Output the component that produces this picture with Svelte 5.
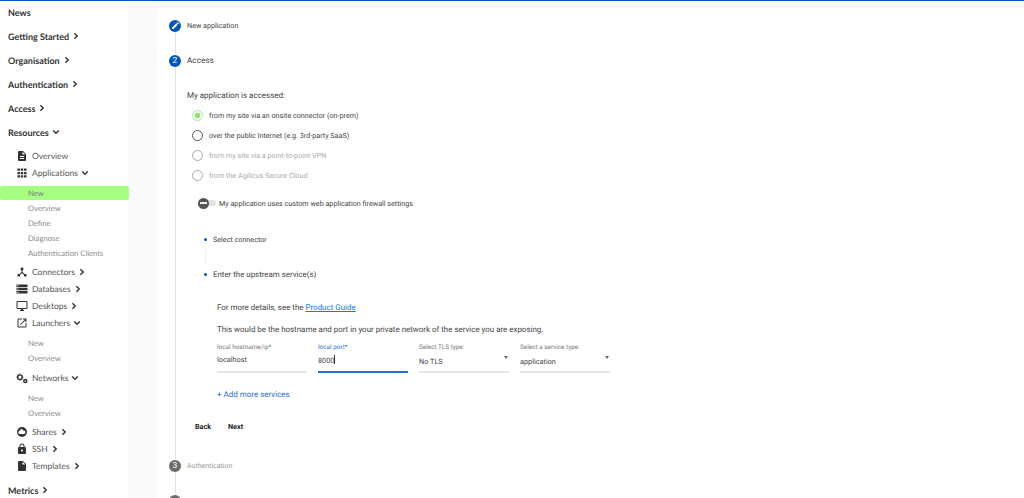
<script lang="ts">
  const radios = [
    { label: 'from my site via an onsite connector (on-prem)', checked: true },
    { label: 'over the public Internet (e.g. 3rd-party SaaS)' },
    { label: 'from my site via a point-to-point VPN', disabled: true },
    { label: 'from the Agilicus Secure Cloud', disabled: true }
  ];
  const appItems = ['New', 'Overview', 'Define', 'Diagnose', 'Authentication Clients'];
</script>

{#snippet chevron(open = false)}
  <svg class="chev" viewBox="0 0 10 10" fill="none" stroke="currentColor" stroke-width="1.8">
    {#if open}
      <polyline points="1.5,3 5,6.5 8.5,3" />
    {:else}
      <polyline points="3,1.5 6.5,5 3,8.5" />
    {/if}
  </svg>
{/snippet}

{#snippet sub(label, open, icon)}
  <div class="sub">
    <svg class="ico" viewBox="0 0 24 24" fill="#333">{@html icon}</svg>
    <span>{label}</span>
    {#if open !== null}{@render chevron(open)}{/if}
  </div>
{/snippet}

<div class="page">
  <aside class="sidebar">
    <div class="top">News</div>
    <div class="top">Getting Started {@render chevron()}</div>
    <div class="top">Organisation {@render chevron()}</div>
    <div class="top">Authentication {@render chevron()}</div>
    <div class="top">Access {@render chevron()}</div>
    <div class="top">Resources {@render chevron(true)}</div>

    <div class="subs">
      {@render sub('Overview', null, '<path d="M14 2H6a2 2 0 0 0-2 2v16a2 2 0 0 0 2 2h12a2 2 0 0 0 2-2V8zm2 16H8v-2h8zm0-4H8v-2h8zm-3-5V3.500L18.500 9z"/>')}
      {@render sub('Applications', true, '<path transform="translate(1.200 1.200) scale(.9)" d="M2 7h5.500V2H2zm7.300 15h5.400v-5H9.300zM2 22h5.500v-5H2zm0-7.500h5.500v-5H2zm7.300 0h5.400v-5H9.300zM16.500 2v5H22V2zM9.300 7h5.400V2H9.300zm7.200 7.500H22v-5h-5.500zm0 7.500H22v-5h-5.500z"/>')}
      <div class="nest apps">
        {#each appItems as item, i}
          <div class="leaf" class:active={i === 0}>{item}</div>
        {/each}
      </div>
      {@render sub('Connectors', false, '<path d="M17 16l-4-4V8.820A3 3 0 0 0 12 3a3 3 0 0 0-1 5.820V12l-4 4H3v5h5v-3.050l4-4.200 4 4.200V21h5v-5z"/>')}
      {@render sub('Databases', false, '<path d="M1 21h22v-5H1zm2-3h2v2H3zM1 3v5h22V3zm4 3H3V4h2zm-4 8.500h22v-5H1zM3 11h2v2H3z"/>')}
      {@render sub('Desktops', false, '<path d="M21 2H3a2 2 0 0 0-2 2v12a2 2 0 0 0 2 2h7v2H8v2h8v-2h-2v-2h7a2 2 0 0 0 2-2V4a2 2 0 0 0-2-2zm0 14H3V4h18z"/>')}
      {@render sub('Launchers', true, '<path d="M19 19H5V5h7V3H5a2 2 0 0 0-2 2v14a2 2 0 0 0 2 2h14a2 2 0 0 0 2-2v-7h-2zM14 3v2h3.590l-9.830 9.830 1.410 1.410L19 6.410V10h2V3z"/>')}
      <div class="nest pair">
        <div class="leaf">New</div>
        <div class="leaf">Overview</div>
      </div>
      {@render sub('Networks', true, '<path d="M11 8.500 9.900 8.100a4 4 0 0 0-.3-.8l.5-1.100-1.300-1.300-1.100.5a4 4 0 0 0-.8-.3L6.500 3.500h-2l-.4 1.100a4 4 0 0 0-.8.3l-1.100-.5L.9 5.700l.5 1.100a4 4 0 0 0-.3.8L0 8v2l1.100.4q.1.4.3.8l-.5 1.100 1.300 1.300 1.100-.5q.4.200.8.3l.4 1.100h2l.4-1.100q.4-.1.8-.3l1.100.5 1.300-1.300-.5-1.100q.2-.4.3-.8L11 10zM5.500 11.500a2.500 2.500 0 1 1 0-5 2.500 2.500 0 0 1 0 5z" transform="translate(1 -1) scale(1.250)"/><circle cx="18.500" cy="18" r="4.500"/><circle cx="18.500" cy="18" r="1.500" fill="#fff"/>')}
      <div class="nest pair last">
        <div class="leaf">New</div>
        <div class="leaf">Overview</div>
      </div>
      {@render sub('Shares', false, '<path d="M12 2a10 10 0 1 0 0 20 10 10 0 0 0 0-20zm4.500 14h-9a3 3 0 0 1-.3-6A4 4 0 0 1 15 9.500a3.300 3.300 0 0 1 1.500 6.500z"/>')}
      {@render sub('SSH', false, '<path d="M18 8h-1V6A5 5 0 0 0 7 6v2H6a2 2 0 0 0-2 2v10a2 2 0 0 0 2 2h12a2 2 0 0 0 2-2V10a2 2 0 0 0-2-2zm-6 9a2 2 0 1 1 0-4 2 2 0 0 1 0 4zm3.100-9H8.900V6a3.100 3.100 0 0 1 6.200 0z"/>')}
      {@render sub('Templates', false, '<path d="M6 2a2 2 0 0 0-2 2v16a2 2 0 0 0 2 2h12a2 2 0 0 0 2-2V8l-6-6zm7 7V3.500L18.500 9z"/>')}
    </div>
    <div class="top metrics">Metrics {@render chevron()}</div>
  </aside>

  <main class="content">
    <div class="stepper">
      <div class="step-head">
        <span class="num"><svg viewBox="0 0 24 24" fill="#fff" width="9" height="9"><path d="M3 17.250V21h3.750L17.810 9.940l-3.750-3.750zM20.710 7.040a1 1 0 0 0 0-1.410l-2.340-2.340a1 1 0 0 0-1.410 0l-1.830 1.830 3.750 3.750z"/></svg></span>
        <span class="small">New application</span>
      </div>
      <div class="line gap1"></div>
      <div class="step-head">
        <span class="num">2</span>
        <span class="title">Access</span>
      </div>

      <div class="step-body">
        <p class="lead">My application is accessed:</p>

        <div class="radios">
          {#each radios as r}
            <div class="radio" class:disabled={r.disabled} class:checked={r.checked}>
              <span class="dot"></span>
              <span>{r.label}</span>
            </div>
          {/each}
        </div>

        <div class="toggle-row">
          <span class="toggle"><span class="knob"><i></i></span></span>
          <span>My application uses custom web application firewall settings</span>
        </div>

        <div class="inner">
          <div class="bullet"><i></i><span class="sm">Select connector</span></div>
          <div class="vline"></div>
          <div class="bullet"><i></i><span>Enter the upstream service(s)</span></div>

          <div class="service">
            <p class="more">For more details, see the <a href="#guide">Product Guide</a></p>
            <p class="desc">This would be the hostname and port in your private network of the service you are exposing.</p>

            <div class="fields">
              <div class="field">
                <label for="host">local hostname/ip*</label>
                <div class="val" id="host">localhost</div>
              </div>
              <div class="field focus">
                <label for="port">local port*</label>
                <div class="val" id="port">8000<b class="caret"></b></div>
              </div>
              <div class="field select">
                <label for="tls">Select TLS type:</label>
                <div class="val" id="tls">No TLS</div>
              </div>
              <div class="field select">
                <label for="svc">Select a service type:</label>
                <div class="val" id="svc">application</div>
              </div>
            </div>

            <div class="add">+ Add more services</div>
          </div>
        </div>

        <div class="actions">
          <span>Back</span>
          <span>Next</span>
        </div>
      </div>

      <div class="step-head muted">
        <span class="num grey">3</span>
        <span class="small">Authentication</span>
      </div>
      <div class="line gap2"></div>
      <div class="step-head">
        <span class="num grey"></span>
      </div>
    </div>
  </main>
</div>

<style>
  :global(body) {
    margin: 0;
    overflow: hidden;
    background: #fff;
  }

  .page {
    display: flex;
    height: 498px;
    overflow: hidden;
    border-top: 1px solid #0057b8;
    box-sizing: border-box;
    background: #fafafa;
    font-family: Roboto, sans-serif;
    color: #333;
    text-rendering: geometricPrecision;
  }

  .sidebar {
    width: 128px;
    flex-shrink: 0;
    background: #fff;
    font-family: Lato, sans-serif;
  }

  .top {
    height: 24px;
    padding-left: 8px;
    display: flex;
    align-items: center;
    gap: 3px;
    font-size: 9px;
    font-weight: 700;
    color: #333;
  }

  .top:first-child {
    margin-top: -1px;
  }

  .chev {
    width: 8px;
    height: 8px;
    color: #333;
  }

  .subs {
    padding-top: 3px;
  }

  .sub {
    height: 17px;
    display: flex;
    align-items: center;
    padding-left: 16px;
    font-size: 8.5px;
    color: #555;
    gap: 3px;
  }

  .sub span {
    margin-left: 1px;
  }

  .ico {
    width: 12px;
    height: 12px;
    flex-shrink: 0;
  }

  .nest {
    font-size: 7.7px;
    color: #8a8a8a;
  }

  .apps {
    padding-top: 5px;
    padding-bottom: 2px;
  }

  .pair {
    padding: 5px 0 3px;
  }

  .pair.last {
    padding-bottom: 2px;
  }

  .leaf {
    height: 15px;
    line-height: 15px;
    padding-left: 28px;
  }

  .leaf.active {
    height: 14px;
    margin: 0 -1px 1px 0;
    background: #a6ff80;
    border-radius: 2px;
    color: #777;
  }

  .metrics {
    margin-top: 4px;
  }

  .content {
    flex: 1;
    margin: 6px 0 0 29px;
    background: #fff;
    padding: 12px 0 0 12px;
    min-width: 0;
  }

  .stepper {
    font-size: 8px;
  }

  .step-head {
    display: flex;
    align-items: center;
    gap: 6px;
    height: 13px;
  }

  .num {
    width: 12px;
    height: 12px;
    border-radius: 50%;
    background: #0057b8;
    color: #fff;
    display: flex;
    align-items: center;
    justify-content: center;
    font-size: 8.5px;
    flex-shrink: 0;
  }

  .num.grey {
    background: #6b6b6b;
  }

  .small {
    font-size: 7.2px;
    color: #444;
  }

  .title {
    font-size: 8.2px;
    color: #444;
  }

  .muted .small {
    font-size: 7px;
    color: #999;
  }

  .line {
    width: 1px;
    background: #e0e0e0;
    margin-left: 6px;
  }

  .gap1 {
    height: 22px;
  }

  .gap2 {
    height: 22px;
  }

  .step-body {
    margin-left: 6px;
    border-left: 1px solid #e0e0e0;
    padding: 23px 0 27px 11px;
  }

  .lead {
    margin: 0;
    font-size: 8px;
    line-height: 12px;
    color: #444;
  }

  .radios {
    margin-top: 3px;
    padding-left: 5px;
  }

  .radio {
    height: 20px;
    display: flex;
    align-items: center;
    gap: 7px;
    font-size: 7.2px;
    color: #444;
  }

  .radio .dot {
    width: 11px;
    height: 11px;
    box-sizing: border-box;
    border: 1px solid #555;
    border-radius: 50%;
    flex-shrink: 0;
    margin-right: -1px;
  }

  .radio.disabled {
    color: #aaa;
  }

  .radio.disabled .dot {
    border-color: #aaa;
  }

  .radio.checked .dot {
    border-color: #a6ef90;
    background: radial-gradient(circle, #8be070 0 2.6px, #fff 3px);
  }

  .toggle-row {
    display: flex;
    align-items: center;
    gap: 3px;
    margin: 11px 0 0 11px;
    font-size: 7.2px;
    color: #444;
    height: 14px;
  }

  .toggle {
    width: 18px;
    height: 6px;
    background: #e2e2e2;
    border-radius: 3px;
    position: relative;
    display: inline-block;
  }

  .knob {
    position: absolute;
    left: 0;
    top: -2.500px;
    width: 11px;
    height: 11px;
    border-radius: 50%;
    background: #555;
    display: flex;
    align-items: center;
    justify-content: center;
  }

  .knob i {
    width: 7px;
    height: 1.500px;
    background: #eee;
  }

  .inner {
    margin-top: 23px;
    padding-left: 17px;
  }

  .bullet {
    display: flex;
    align-items: center;
    gap: 6px;
    height: 12px;
    font-size: 7.9px;
    color: #444;
  }

  .bullet i {
    width: 3px;
    height: 3px;
    border-radius: 50%;
    background: #0057b8;
  }

  .sm {
    font-size: 7.2px;
  }

  .vline {
    width: 1px;
    height: 16px;
    margin: 3px 0 4px 1px;
    background: #eee;
  }

  .service {
    padding: 22px 0 0 13px;
  }

  .more,
  .desc {
    margin: 0;
    font-size: 7.95px;
    line-height: 12px;
    color: #444;
  }

  .desc {
    margin-top: 10px;
  }

  a {
    color: #1a73e8;
  }

  .fields {
    display: flex;
    gap: 11px;
    margin-top: 7px;
  }

  .field {
    width: 90px;
    height: 28px;
    border-bottom: 2px solid #e6e6e6;
    position: relative;
    box-sizing: content-box;
  }

  .field label {
    display: block;
    font-size: 6.4px;
    line-height: 8px;
    color: #777;
  }

  .val {
    font-size: 7.3px;
    line-height: 10px;
    margin-top: 4px;
    color: #444;
  }

  .select .val {
    margin-top: 6px;
  }

  .select::after {
    content: '';
    position: absolute;
    right: 1px;
    top: 13px;
    border: 2.500px solid transparent;
    border-top: 3px solid #666;
  }

  .focus {
    border-bottom-color: #2a6fc9;
  }

  .focus label {
    color: #2a6fc9;
  }

  .caret {
    display: inline-block;
    width: 1px;
    height: 9px;
    background: #333;
    vertical-align: -1px;
  }

  .add {
    margin-top: 16px;
    font-size: 8px;
    line-height: 11px;
    color: #2a6fc9;
  }

  .actions {
    display: flex;
    gap: 17px;
    margin: 22px 0 0 8px;
    font-size: 7.2px;
    font-weight: 700;
    color: #222;
    line-height: 10px;
  }
</style>
